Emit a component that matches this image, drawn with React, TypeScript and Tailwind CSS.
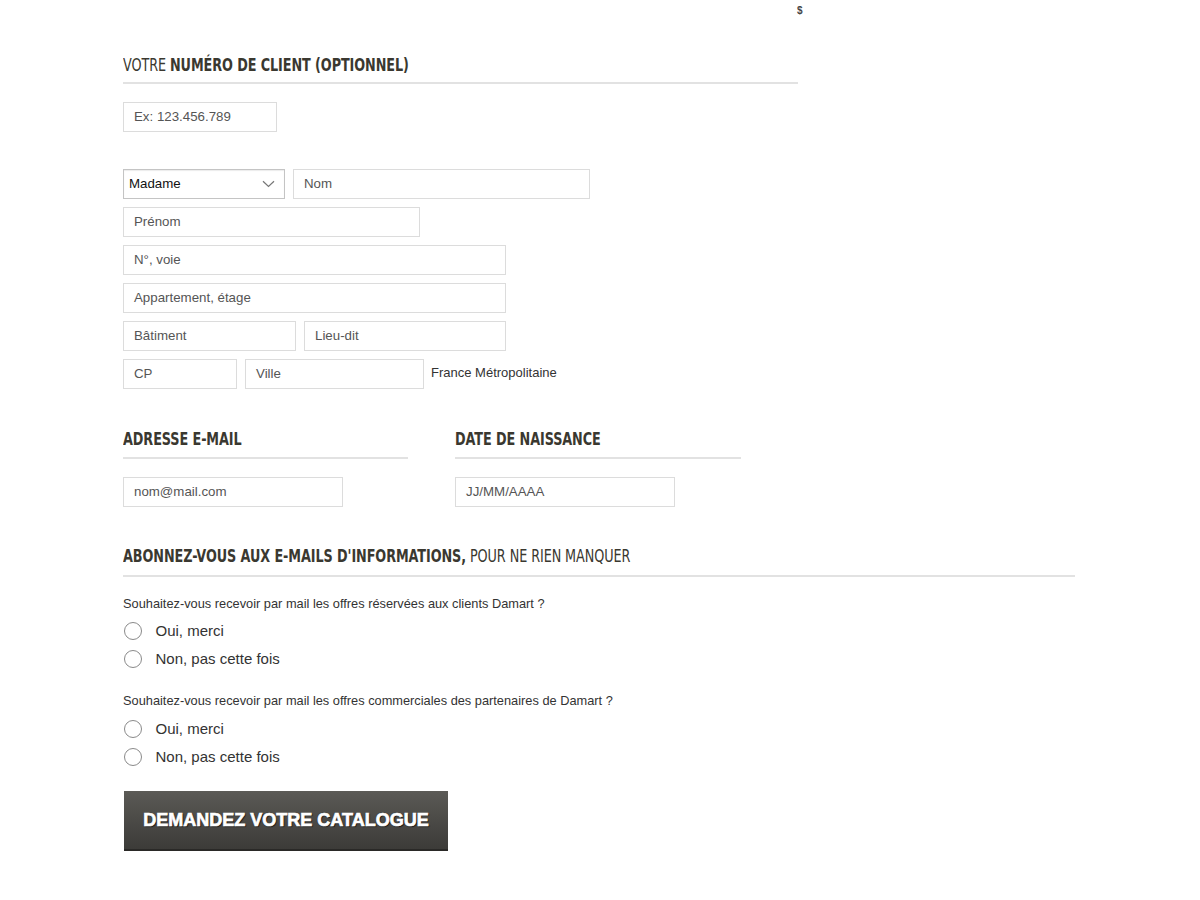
import React from "react";

const cond = { fontFamily: '"DejaVu Sans Condensed", "Liberation Sans", sans-serif' };

function Heading({ children }: { children: React.ReactNode }) {
  return (
    <div className="h-[22px] whitespace-nowrap">
      <span
        className="inline-block origin-left scale-x-[0.79] text-[18px] leading-[22px] text-[#3a3830] tracking-[-0.1px]"
        style={cond}
      >
        {children}
      </span>
    </div>
  );
}

function Field({ ph, w }: { ph: string; w: string }) {
  return (
    <div className={`${w} h-[30px] border border-[#dcdcdc] bg-white flex items-center pl-[10px] text-[13.3px] text-[#555]`}>
      {ph}
    </div>
  );
}

function Radio({ label }: { label: string }) {
  return (
    <div className="flex items-center h-[28px]">
      <span className="ml-[0.5px] w-[18px] h-[18px] rounded-full border-[1.5px] border-[#8a8a8a] bg-white" />
      <span className="ml-[14px] text-[15px] text-[#333]">{label}</span>
    </div>
  );
}

export default function App() {
  return (
    <div className="w-[1200px] h-[900px] bg-white relative" style={{ fontFamily: '"Liberation Sans", Arial, sans-serif' }}>
      <div className="absolute left-[797px] top-[3px] text-[10px] text-[#444] font-bold">$</div>
      <div className="pl-[123px] pt-[54px]">
        <div className="w-[675px]">
          <Heading>
            VOTRE <span className="font-bold">NUMÉRO DE CLIENT (OPTIONNEL)</span>
          </Heading>
          <div className="mt-[6px] h-[2px] bg-[#e2e2e2]" />
        </div>
        <div className="mt-[18px]">
          <Field ph="Ex: 123.456.789" w="w-[154px]" />
        </div>

        <div className="mt-[37px] flex flex-col gap-[8px]">
          <div className="flex gap-[8px]">
            <div className="w-[162px] h-[30px] border border-[#c4c4c4] shadow-[inset_0_1px_1px_rgba(0,0,0,0.08)] bg-white flex items-center justify-between pl-[5px] pr-[9px] text-[13.3px] text-[#111]">
              <span>Madame</span>
              <svg width="13" height="8" viewBox="0 0 13 8" fill="none">
                <path d="M1 1.2 L6.5 6.5 L12 1.2" stroke="#777" strokeWidth="1.2" />
              </svg>
            </div>
            <Field ph="Nom" w="w-[297px]" />
          </div>
          <Field ph="Prénom" w="w-[297px]" />
          <Field ph="N°, voie" w="w-[383px]" />
          <Field ph="Appartement, étage" w="w-[383px]" />
          <div className="flex gap-[8px]">
            <Field ph="Bâtiment" w="w-[173px]" />
            <Field ph="Lieu-dit" w="w-[202px]" />
          </div>
          <div className="flex gap-[8px] items-center">
            <Field ph="CP" w="w-[114px]" />
            <Field ph="Ville" w="w-[179px]" />
            <span className="ml-[-1px] text-[13px] text-[#333] -mt-[2px]">France Métropolitaine</span>
          </div>
        </div>

        <div className="mt-[39px] flex gap-[47px]">
          <div className="w-[285px]">
            <Heading>
              <span className="font-bold">ADRESSE E-MAIL</span>
            </Heading>
            <div className="mt-[7px] h-[2px] bg-[#e2e2e2]" />
            <div className="mt-[18px]">
              <Field ph="nom@mail.com" w="w-[220px]" />
            </div>
          </div>
          <div className="w-[286px]">
            <Heading>
              <span className="font-bold">DATE DE NAISSANCE</span>
            </Heading>
            <div className="mt-[7px] h-[2px] bg-[#e2e2e2]" />
            <div className="mt-[18px]">
              <Field ph="JJ/MM/AAAA" w="w-[220px]" />
            </div>
          </div>
        </div>

        <div className="mt-[38px] w-[952px]">
          <Heading>
            <span className="font-bold">ABONNEZ-VOUS AUX E-MAILS D'INFORMATIONS,</span> POUR NE RIEN MANQUER
          </Heading>
          <div className="mt-[8px] h-[2px] bg-[#e2e2e2]" />
        </div>

        <div className="mt-[19px] text-[12.8px] text-[#333] leading-[16px]">
          Souhaitez-vous recevoir par mail les offres réservées aux clients Damart ?
        </div>
        <div className="mt-[5px]">
          <Radio label="Oui, merci" />
          <Radio label="Non, pas cette fois" />
        </div>

        <div className="mt-[20px] text-[12.8px] text-[#333] leading-[16px]">
          Souhaitez-vous recevoir par mail les offres commerciales des partenaires de Damart ?
        </div>
        <div className="mt-[6px]">
          <Radio label="Oui, merci" />
          <Radio label="Non, pas cette fois" />
        </div>

        <div className="mt-[20px] ml-[1px] w-[324px] h-[60px] bg-gradient-to-b from-[#5b5a56] to-[#3c3b38] border-b-[2px] border-[#2a2927] flex items-center justify-center">
          <span
            className="text-white font-bold text-[18px]"
            style={{
              fontFamily: '"Liberation Sans", Arial, sans-serif',
              WebkitTextStroke: "0.7px #fff",
              textShadow: "0 0 1px #111, 1px 1px 1px #111",
            }}
          >
            DEMANDEZ VOTRE CATALOGUE
          </span>
        </div>
      </div>
    </div>
  );
}
